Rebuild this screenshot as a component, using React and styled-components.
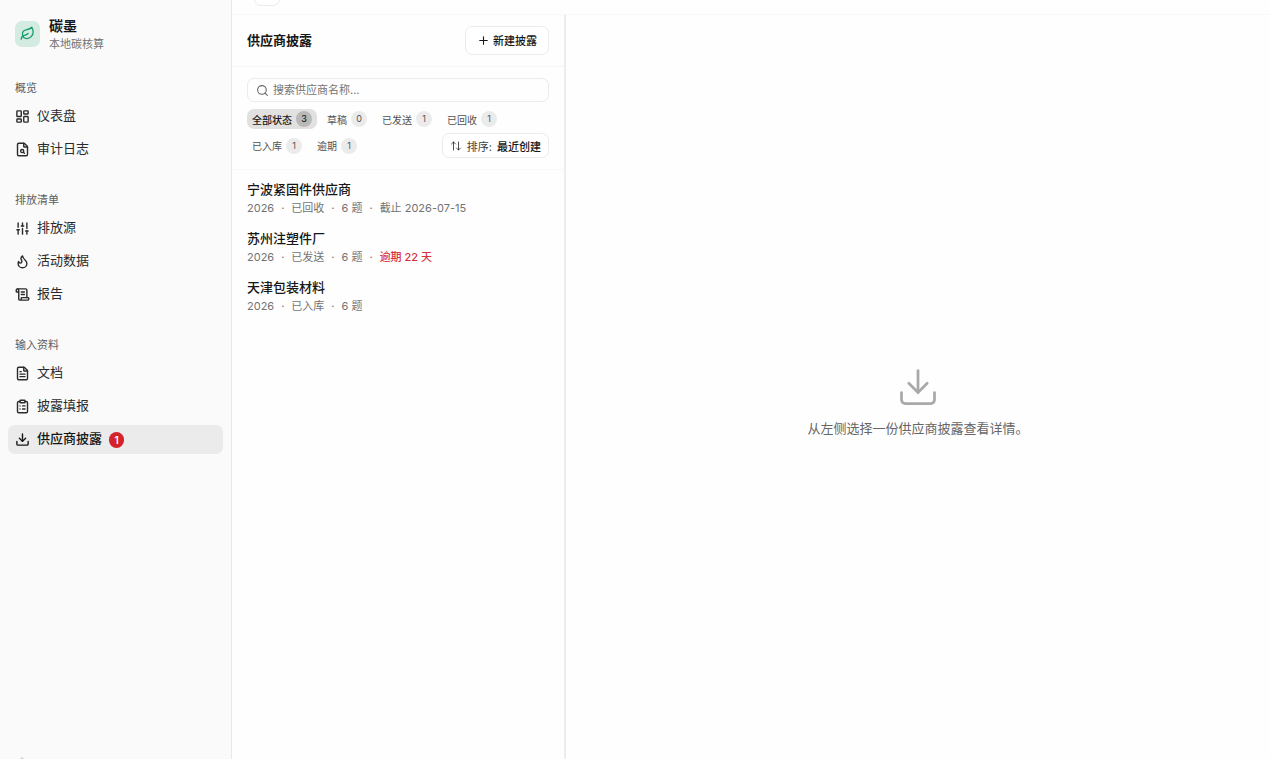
import React from 'react';
import styled, { createGlobalStyle } from 'styled-components';
import {
    ArrowUpDown,
    ClipboardList,
    Download,
    FileSearch,
    FileText,
    Flame,
    LayoutDashboard,
    Leaf,
    Plus,
    ScrollText,
    Search,
    Settings,
    SlidersVertical,
} from 'lucide-react';

const GlobalStyle = createGlobalStyle`
    * {
        box-sizing: border-box;
    }

    body {
        margin: 0;
        background: #fefefe;
        color: #171717;
        font-family: Inter, "Noto Sans CJK SC", sans-serif;
        font-size: 13px;
    }

    button, input {
        font-family: inherit;
        color: inherit;
    }

    h1, h2, p, ul {
        margin: 0;
        padding: 0;
    }
`;

const Shell = styled.div`
    display: flex;
    height: 100vh;
    overflow: hidden;
`;

const Sidebar = styled.aside`
    display: flex;
    flex-direction: column;
    flex: none;
    width: 232px;
    background: #fafafa;
    border-right: 1px solid #e9e9e9;
`;

const Brand = styled.div`
    display: flex;
    align-items: center;
    gap: 9px;
    padding: 17px 15px 0;
    margin-bottom: 21px;
`;

const BrandMark = styled.span`
    display: flex;
    align-items: center;
    justify-content: center;
    width: 25px;
    height: 26px;
    margin-bottom: 3px;
    border-radius: 7px;
    background: #d3ebe0;
    color: #159a6c;
`;

const BrandName = styled.p`
    font-size: 14px;
    line-height: 18px;
    font-weight: 700;
`;

const BrandNote = styled.p`
    font-size: 11px;
    line-height: 18px;
    color: #737373;
`;

const NavGroup = styled.nav`
    padding: 0 8px;
    margin-bottom: 22px;
`;

const GroupLabel = styled.h2`
    padding: 0 7px;
    font-size: 11px;
    line-height: 28px;
    font-weight: 400;
    color: #5c5c5c;
`;

const NavList = styled.ul`
    display: flex;
    flex-direction: column;
    gap: 4px;
    list-style: none;
`;

const NavLink = styled.a`
    display: flex;
    align-items: center;
    gap: 7px;
    height: 29px;
    padding: 0 7px 2px;
    border-radius: 7px;
    background: ${props => (props.$active ? '#ebebeb' : 'transparent')};
    color: ${props => (props.$active ? '#171717' : '#2b2b2b')};
    line-height: 19px;
    font-weight: ${props => (props.$active ? 500 : 400)};
    text-decoration: none;

    svg {
        margin-top: 2px;
    }
`;

const NavBadge = styled.span`
    width: 15px;
    margin-top: 2px;
    border-radius: 8px;
    background: #d4242b;
    color: #fff;
    font-size: 10px;
    line-height: 16px;
    font-weight: 600;
    text-align: center;
`;

const SidebarFooter = styled.div`
    height: 2px;
    margin-top: auto;
    padding: 0 15px;
    overflow: hidden;
    color: #cfcfcf;
`;

const Main = styled.main`
    display: flex;
    flex-direction: column;
    flex: 1;
    min-width: 0;
`;

const TopBar = styled.header`
    display: flex;
    align-items: flex-end;
    flex: none;
    height: 15px;
    padding: 0 22px 8px;
    overflow: hidden;
    border-bottom: 1px solid #f8f8f8;
`;

const TopButton = styled.button`
    flex: none;
    width: 26px;
    height: 26px;
    border: 1px solid #ebebeb;
    border-radius: 7px;
    background: #fff;
`;

const Columns = styled.div`
    display: flex;
    flex: 1;
    min-height: 0;
`;

const ListPane = styled.section`
    flex: none;
    width: 334px;
    border-right: 2px solid #ececec;
`;

const PaneHeader = styled.div`
    display: flex;
    align-items: center;
    justify-content: space-between;
    height: 52px;
    padding: 0 15px 1px;
    border-bottom: 1px solid #f6f6f6;
`;

const PaneTitle = styled.h1`
    font-size: 13px;
    line-height: 20px;
    font-weight: 600;
`;

const OutlineButton = styled.button`
    display: flex;
    align-items: center;
    gap: ${props => (props.$small ? '5px' : '3px')};
    height: ${props => (props.$small ? '25px' : '29px')};
    margin-left: auto;
    padding: ${props => (props.$small ? '0 7px' : '0 11px')};
    border: 1px solid #ebebeb;
    border-radius: 7px;
    background: #fff;
    font-size: 11px;
    font-weight: 500;
`;

const SortLabel = styled.span`
    color: #404040;
    font-weight: 400;
`;

const Tools = styled.div`
    padding: 11px 15px;
    border-bottom: 1px solid #f9f9f9;
`;

const SearchBox = styled.label`
    display: flex;
    align-items: center;
    gap: 4px;
    height: 24px;
    padding: 0 8px;
    margin-bottom: 7px;
    border: 1px solid #ebebeb;
    border-radius: 7px;
    color: #666;
`;

const SearchInput = styled.input`
    flex: 1;
    min-width: 0;
    padding: 0;
    border: 0;
    outline: 0;
    background: transparent;
    font-size: 11px;

    &::placeholder {
        color: #737373;
    }
`;

const Filters = styled.div`
    display: flex;
    flex-wrap: wrap;
    align-items: center;
    gap: 4px 5px;
`;

const FilterPill = styled.button`
    display: flex;
    align-items: center;
    gap: 4px;
    height: 20px;
    padding: 0 5px;
    border: 0;
    border-radius: 7px;
    background: ${props => (props.$active ? '#e1e1e1' : 'transparent')};
    color: ${props => (props.$active ? '#171717' : '#525252')};
    font-size: 10px;
    font-weight: ${props => (props.$active ? 500 : 400)};
`;

const Count = styled.span`
    width: 16px;
    border-radius: 8px;
    background: ${props => (props.$active ? '#b9b9b9' : '#ebebeb')};
    font-size: 9px;
    line-height: 16px;
    text-align: center;
`;

const SupplierList = styled.ul`
    padding-top: 4px;
    list-style: none;
`;

const SupplierLink = styled.a`
    display: block;
    padding: 6px 15px 5px;
    color: inherit;
    text-decoration: none;
`;

const SupplierName = styled.p`
    line-height: 18px;
    font-weight: 500;
`;

const Meta = styled.p`
    display: flex;
    gap: 7px;
    font-size: 11px;
    line-height: 20px;
    color: #737373;
`;

const Overdue = styled.span`
    color: #d9303a;
    font-weight: 500;
`;

const Detail = styled.section`
    display: flex;
    flex-direction: column;
    align-items: center;
    justify-content: center;
    gap: 9px;
    flex: 1;
    padding-top: 29px;
    color: #a9a9a9;
`;

const DetailHint = styled.p`
    line-height: 20px;
    color: #666;
`;

const groups = [
    {
        label: '概览',
        items: [
            { text: '仪表盘', icon: LayoutDashboard },
            { text: '审计日志', icon: FileSearch },
        ],
    },
    {
        label: '排放清单',
        items: [
            { text: '排放源', icon: SlidersVertical },
            { text: '活动数据', icon: Flame },
            { text: '报告', icon: ScrollText },
        ],
    },
    {
        label: '输入资料',
        items: [
            { text: '文档', icon: FileText },
            { text: '披露填报', icon: ClipboardList },
            { text: '供应商披露', icon: Download, badge: 1, active: true },
        ],
    },
];

const filters = [
    { text: '全部状态', count: 3, active: true },
    { text: '草稿', count: 0 },
    { text: '已发送', count: 1 },
    { text: '已回收', count: 1 },
    { text: '已入库', count: 1 },
    { text: '逾期', count: 1 },
];

const suppliers = [
    { name: '宁波紧固件供应商', meta: ['2026', '已回收', '6 题', '截止 2026-07-15'] },
    { name: '苏州注塑件厂', meta: ['2026', '已发送', '6 题'], overdue: '逾期 22 天' },
    { name: '天津包装材料', meta: ['2026', '已入库', '6 题'] },
];

function SidebarNav() {
    return (
        <Sidebar>
            <Brand>
                <BrandMark>
                    <Leaf size={15} />
                </BrandMark>
                <div>
                    <BrandName>碳墨</BrandName>
                    <BrandNote>本地碳核算</BrandNote>
                </div>
            </Brand>
            {groups.map(group => (
                <NavGroup key={group.label} aria-label={group.label}>
                    <GroupLabel>{group.label}</GroupLabel>
                    <NavList>
                        {group.items.map(({ text, icon: Icon, badge, active }) => (
                            <li key={text}>
                                <NavLink href="#" $active={active}>
                                    <Icon size={15} strokeWidth={2.25} />
                                    {text}
                                    {badge && <NavBadge>{badge}</NavBadge>}
                                </NavLink>
                            </li>
                        ))}
                    </NavList>
                </NavGroup>
            ))}
            <SidebarFooter>
                <Settings size={14} />
            </SidebarFooter>
        </Sidebar>
    );
}

function Supplier({ name, meta, overdue }) {
    return (
        <li>
            <SupplierLink href="#">
                <SupplierName>{name}</SupplierName>
                <Meta>
                    {meta.map((part, i) => (
                        <React.Fragment key={part}>
                            {i > 0 && <span>·</span>}
                            <span>{part}</span>
                        </React.Fragment>
                    ))}
                    {overdue && <span>·</span>}
                    {overdue && <Overdue>{overdue}</Overdue>}
                </Meta>
            </SupplierLink>
        </li>
    );
}

export default function App() {
    return (
        <Shell>
            <GlobalStyle />
            <SidebarNav />
            <Main>
                <TopBar>
                    <TopButton aria-label="菜单" />
                </TopBar>
                <Columns>
                    <ListPane>
                        <PaneHeader>
                            <PaneTitle>供应商披露</PaneTitle>
                            <OutlineButton>
                                <Plus size={13} />
                                新建披露
                            </OutlineButton>
                        </PaneHeader>
                        <Tools>
                            <SearchBox>
                                <Search size={13} />
                                <SearchInput placeholder="搜索供应商名称..." aria-label="搜索供应商名称" />
                            </SearchBox>
                            <Filters>
                                {filters.map(({ text, count, active }) => (
                                    <FilterPill key={text} $active={active}>
                                        {text}
                                        <Count $active={active}>{count}</Count>
                                    </FilterPill>
                                ))}
                                <OutlineButton $small>
                                    <ArrowUpDown size={12} strokeWidth={1.5} />
                                    <SortLabel>排序:</SortLabel>
                                    最近创建
                                </OutlineButton>
                            </Filters>
                        </Tools>
                        <SupplierList>
                            {suppliers.map(supplier => (
                                <Supplier key={supplier.name} {...supplier} />
                            ))}
                        </SupplierList>
                    </ListPane>
                    <Detail>
                        <Download size={44} strokeWidth={1.5} />
                        <DetailHint>从左侧选择一份供应商披露查看详情。</DetailHint>
                    </Detail>
                </Columns>
            </Main>
        </Shell>
    );
}
